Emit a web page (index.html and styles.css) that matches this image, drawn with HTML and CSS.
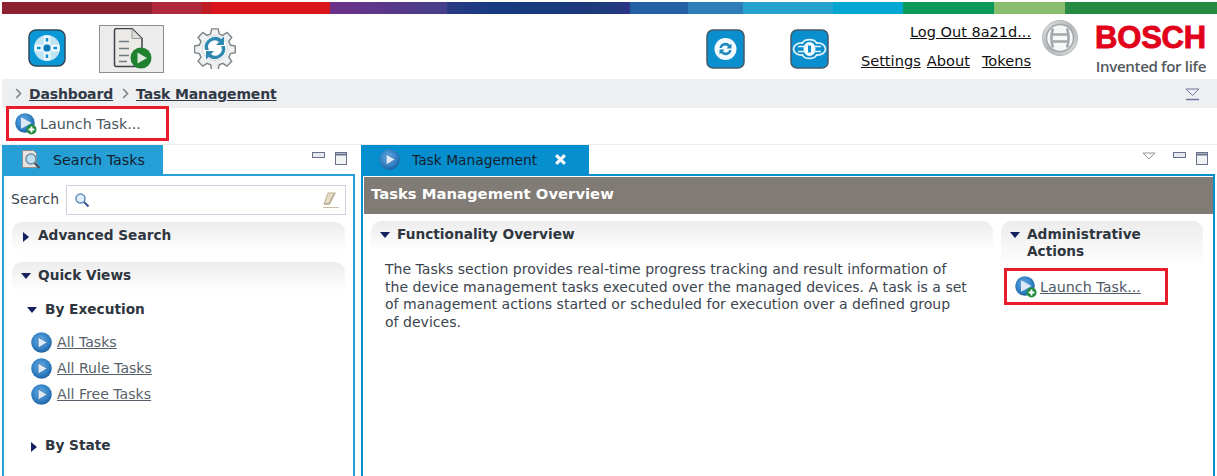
FILE: index.html
```html
<!DOCTYPE html>
<html lang="en">
<head>
<meta charset="utf-8">
<title>Task Management</title>
<link rel="stylesheet" href="styles.css">
</head>
<body>
<svg class="defs" width="0" height="0" aria-hidden="true">
  <defs>
    <radialGradient id="orb" cx="45%" cy="40%" r="65%">
      <stop offset="0" stop-color="#6aaee6"/><stop offset="0.65" stop-color="#2f7fc4"/><stop offset="1" stop-color="#1b5890"/>
    </radialGradient>
    <linearGradient id="silver" x1="0" y1="0" x2="1" y2="1">
      <stop offset="0" stop-color="#e6e8e9"/><stop offset=".5" stop-color="#b0b4b6"/><stop offset="1" stop-color="#dfe1e2"/>
    </linearGradient>
    <symbol id="play" viewBox="0 0 20 20">
      <circle cx="10" cy="10" r="9.800" fill="url(#orb)"/>
      <path d="M6.800 4.800 15.500 10l-8.700 5.200z" fill="#dfeaf6" stroke="#2a659f" stroke-width=".6"/>
    </symbol>
    <symbol id="playadd" viewBox="0 0 22 22">
      <circle cx="10" cy="10" r="9.800" fill="url(#orb)"/>
      <path d="M6 4.200 16.500 10 6 15.800z" fill="#dfe9f4"/>
      <circle cx="16.500" cy="16.500" r="5" fill="#1f8a3a"/>
      <path d="M16.500 13.600v5.800M13.600 16.500h5.800" stroke="#fff" stroke-width="1.800"/>
    </symbol>
    <symbol id="tri-down" viewBox="0 0 10 6"><path d="M0 0h10L5 6z" fill="#14215f"/></symbol>
    <symbol id="tri-right" viewBox="0 0 6 10"><path d="M0 0v10l6-5z" fill="#14215f"/></symbol>
    <symbol id="min" viewBox="0 0 13 7"><rect x=".5" y=".5" width="12" height="5" fill="#e6e8ef" stroke="#69708c"/></symbol>
    <symbol id="max" viewBox="0 0 12 13"><rect x=".5" y=".5" width="11" height="12" fill="#f2f3f5" stroke="#69708c"/><path d="M1 2.500h10" stroke="#69708c" stroke-width="2"/></symbol>
    <symbol id="chevron" viewBox="0 0 7 11"><path d="m1.200 1 4.300 4.500-4.300 4.500" fill="none" stroke="#858a90" stroke-width="1.800"/></symbol>
  </defs>
</svg>

<div class="rainbow">
  <i class="c1"></i><i class="c2"></i><i class="c3"></i><i class="c4"></i><i class="c5"></i><i class="c6"></i><i class="c7"></i><i class="c8"></i><i class="c9"></i><i class="c10"></i><i class="c11"></i><i class="c12"></i><i class="c13"></i>
</div>

<header class="top">
  <nav class="nav-left">
    <span class="nav-icon">
      <svg width="38" height="38" viewBox="0 0 38 38">
        <rect x="1" y="1" width="36" height="36" rx="7" fill="#0a97d6" stroke="#2f4a5c" stroke-width="1.500"/>
        <circle cx="19" cy="19" r="13" fill="#bfe5f5"/>
        <g fill="#eaf7fc"><rect x="15.500" y="6.500" width="7" height="9" rx="1.500"/><rect x="15.500" y="22.500" width="7" height="9" rx="1.500"/><rect x="6.500" y="15.500" width="9" height="7" rx="1.500"/><rect x="22.500" y="15.500" width="9" height="7" rx="1.500"/></g>
        <circle cx="19" cy="19" r="3.500" fill="#0b78b4"/>
        <g fill="#0a8fce"><rect x="17.800" y="9" width="2.400" height="3.500"/><rect x="17.800" y="25.500" width="2.400" height="3.500"/><rect x="9" y="17.800" width="3.500" height="2.400"/><rect x="25.500" y="17.800" width="3.500" height="2.400"/></g>
      </svg>
    </span>
    <span class="nav-icon active">
      <svg width="40" height="42" viewBox="0 0 40 42">
        <path d="M2.500 2.500a2 2 0 0 1 2-2H20l10 10v26a2 2 0 0 1-2 2H4.500a2 2 0 0 1-2-2z" fill="#eceae6" stroke="#3f444a" stroke-width="1.500"/>
        <path d="M20 1v9.500h9.500" fill="#dcdcdc" stroke="#9a9a9a"/>
        <path d="M7 13.500h10M7 20.500h10M7 27.500h10M7 33.500h8" stroke="#6f7a80" stroke-width="1.500"/>
        <circle cx="29" cy="30" r="10.500" fill="#1f8130"/>
        <path d="M25.500 24.500 35 30l-9.500 5.500z" fill="#dfe8dc"/>
      </svg>
    </span>
    <span class="nav-icon">
      <svg width="42" height="42" viewBox="0 0 42 42">
        <path d="M17.500 1h7l1 5.200 3.800 1.600 4.400-3 5 5-3 4.400 1.600 3.800 5.200 1v7l-5.200 1-1.600 3.800 3 4.400-5 5-4.400-3-3.800 1.600-1 5.200h-7l-1-5.200-3.800-1.600-4.400 3-5-5 3-4.400-1.600-3.800-5.200-1v-7l5.200-1 1.600-3.800-3-4.400 5-5 4.400 3 3.800-1.600z" fill="#eef0f1" stroke="#7d8588" stroke-width="1.500" transform="scale(.95) translate(1 1)"/>
        <circle cx="21" cy="21" r="12.500" fill="#fff" stroke="#d4d8da"/>
        <path d="M11 23a10.500 10.500 0 0 1 16.500-11L30 9.500V18h-8l3-3a6.500 6.500 0 0 0-10 8z" fill="#2f88b0"/>
        <path d="M31 19a10.500 10.500 0 0 1-16.500 11L12 32.500V24h8l-3 3a6.500 6.500 0 0 0 10-8z" fill="#2f88b0"/>
      </svg>
    </span>
  </nav>
  <div class="nav-right">
    <span class="square-btn">
      <svg width="39" height="40" viewBox="0 0 39 40">
        <rect x="1" y="1" width="37" height="38" rx="6" fill="#0a8fce" stroke="#455a68" stroke-width="1.500"/>
        <circle cx="19.500" cy="20" r="11" fill="#f2fafd"/>
        <path d="M13.500 19a6 6 0 0 1 10.500-3l1.500-1.500v5h-5l1.700-1.700a3.800 3.800 0 0 0-6.500 1.200zM25.500 21a6 6 0 0 1-10.500 3l-1.500 1.500v-5h5l-1.700 1.700a3.800 3.800 0 0 0 6.500-1.200z" fill="#1d86bd"/>
      </svg>
    </span>
    <span class="square-btn">
      <svg width="39" height="40" viewBox="0 0 39 40">
        <rect x="1" y="1" width="37" height="38" rx="6" fill="#0a8fce" stroke="#455a68" stroke-width="1.500"/>
        <path d="M12.500 14c2-4.500 12-4.500 14 0 5-.5 9 2.500 9 6s-4 6.500-9 6c-2 4.500-12 4.500-14 0-5 .5-9-2.500-9-6s4-6.500 9-6z" fill="none" stroke="#dff1f9" stroke-width="1.800"/>
        <ellipse cx="19.500" cy="20" rx="6" ry="7" fill="#f5fbfd"/>
        <path d="M8 17.500h7M8 22.500h7M24 17.500h7M24 22.500h7" stroke="#dff1f9" stroke-width="1.500"/>
        <path d="M19.500 16.500v7" stroke="#0a8fce" stroke-width="3"/>
      </svg>
    </span>
    <div class="user-links">
      <a class="link-top" href="#">Log Out 8a21d...</a>
      <div class="link-row"><a href="#">Settings</a><a href="#">About</a><a class="tokens" href="#">Tokens</a></div>
    </div>
    <svg class="armature" width="38" height="38" viewBox="0 0 38 38">
      <circle cx="19" cy="19" r="17.500" fill="url(#silver)" stroke="#b4b8ba"/>
      <circle cx="19" cy="19" r="13.500" fill="#f6f7f7" stroke="#a3a7aa" stroke-width="1.500"/>
      <path d="M12 9.500c-2 6-2 13 0 19M26 9.500c2 6 2 13 0 19M11 15.500h16M11 22.500h16" stroke="#a4a8ab" stroke-width="2.600" fill="none"/>
    </svg>
    <div class="brand">
      <span class="brand-name">BOSCH</span>
      <span class="brand-tag">Invented for life</span>
    </div>
  </div>
</header>

<div class="crumbs">
  <svg class="chev" width="7" height="11"><use href="#chevron"/></svg><a href="#">Dashboard</a><svg class="chev" width="7" height="11"><use href="#chevron"/></svg><a href="#">Task Management</a>
  <svg class="crumb-menu" width="15" height="13" viewBox="0 0 15 13"><path d="M1 1h13L7.500 7.500z" fill="#eeeff4" stroke="#6f74a0"/><path d="M1 11.500h13" stroke="#6f74a0" stroke-width="1.500"/></svg>
</div>

<div class="toolbar">
  <div class="redbox toolbar-box">
    <svg width="22" height="22"><use href="#playadd"/></svg>
    <span>Launch Task...</span>
  </div>
</div>

<main class="panes">
  <section class="pane pane-left">
    <div class="tabbar">
      <div class="tab tab-search">
        <svg width="21" height="21" viewBox="0 0 21 21"><path d="M1.500 1.500h11l3 3v14h-14z" fill="#e6e3de" stroke="#8c8f91"/><circle cx="10" cy="10" r="5" fill="#bfe0f2" stroke="#6e8ea6" stroke-width="1.500"/><path d="m13.500 14 5 5" stroke="#4e5358" stroke-width="2.200"/></svg>
        <span>Search Tasks</span>
      </div>
      <div class="win-ctl"><svg width="13" height="7"><use href="#min"/></svg><svg width="12" height="13"><use href="#max"/></svg></div>
    </div>
    <div class="pane-body left-body">
      <div class="search-row">
        <label>Search</label>
        <div class="search-box">
          <svg width="16" height="16" viewBox="0 0 16 16"><circle cx="6.500" cy="6.500" r="4.500" fill="#e2eff9" stroke="#5f8fc4" stroke-width="1.500"/><path d="m10 10 4.500 4.500" stroke="#3f4f8a" stroke-width="2"/></svg>
          <svg width="18" height="18" viewBox="0 0 18 18"><path d="M6 2h7.500l-1 1.500-5 9.500H2z" fill="#e6dcc6" stroke="#bdb095"/><path d="M2 13h5l5-10" fill="none" stroke="#a99d85"/><path d="M1 16.500h16" stroke="#c9bda4"/></svg>
        </div>
      </div>
      <div class="section-head"><svg class="tri-r" width="6" height="10"><use href="#tri-right"/></svg><span>Advanced Search</span></div>
      <div class="section-head quick"><svg class="tri-d" width="10" height="6"><use href="#tri-down"/></svg><span>Quick Views</span></div>
      <div class="sub-head exec"><svg width="10" height="6"><use href="#tri-down"/></svg><span>By Execution</span></div>
      <ul class="task-list">
        <li><svg width="21" height="21"><use href="#play"/></svg><a href="#">All Tasks</a></li>
        <li><svg width="21" height="21"><use href="#play"/></svg><a href="#">All Rule Tasks</a></li>
        <li><svg width="21" height="21"><use href="#play"/></svg><a href="#">All Free Tasks</a></li>
      </ul>
      <div class="sub-head state"><svg width="6" height="10"><use href="#tri-right"/></svg><span>By State</span></div>
    </div>
  </section>

  <section class="pane pane-right">
    <div class="tabbar">
      <div class="tab tab-task">
        <svg width="21" height="21"><use href="#play"/></svg>
        <span>Task Management</span>
        <svg class="close" width="13" height="13" viewBox="0 0 12 12"><path d="m2 2 8 8M10 2l-8 8" stroke="#f4f6f8" stroke-width="3"/></svg>
      </div>
      <div class="win-ctl">
        <svg class="view-menu" width="14" height="8" viewBox="0 0 14 8"><path d="M1 1h12L7 7z" fill="#fff" stroke="#8f9296"/></svg>
        <svg width="13" height="7"><use href="#min"/></svg><svg width="12" height="13"><use href="#max"/></svg>
      </div>
    </div>
    <div class="pane-body right-body">
      <h1 class="title-bar">Tasks Management Overview</h1>
      <div class="columns">
        <article class="col-main">
          <div class="section-head"><svg class="tri-d" width="10" height="6"><use href="#tri-down"/></svg><span>Functionality Overview</span></div>
          <p>The Tasks section provides real-time progress tracking and result information of the device management tasks executed over the managed devices. A task is a set of management actions started or scheduled for execution over a defined group of devices.</p>
        </article>
        <aside class="col-side">
          <div class="section-head side-head"><svg class="tri-d" width="10" height="6"><use href="#tri-down"/></svg><span>Administrative Actions</span></div>
          <div class="redbox side-box">
            <svg width="22" height="22"><use href="#playadd"/></svg>
            <a href="#">Launch Task...</a>
          </div>
        </aside>
      </div>
    </div>
  </section>
</main>
</body>
</html>
```
FILE: styles.css
```css
* { box-sizing: border-box; }
html, body { margin: 0; padding: 0; }
body {
  width: 1217px;
  height: 476px;
  overflow: hidden;
  background: #fff;
  font-family: "DejaVu Sans", Verdana, sans-serif;
  font-size: 14px;
  color: #333;
}
.defs { display: block; height: 0; }
a { color: inherit; }

.rainbow { display: flex; height: 12px; margin: 2px 0 0 2px; }
.rainbow i { display: block; height: 100%; }
.c1 { width: 150px; background: #8e2233; }
.c2 { width: 50px; background: #b0283c; }
.c3 { width: 9px; background: #bc1c22; }
.c4 { width: 119px; background: #d8161c; }
.c5 { width: 117px; background: linear-gradient(90deg, #6c3088, #46408a); }
.c6 { width: 183px; background: linear-gradient(90deg, #2a3a85, #163a80 25%, #1c3a7c 85%, #2a3584); }
.c7 { width: 58px; background: #2460a6; }
.c8 { width: 55px; background: #2f7db8; }
.c9 { width: 90px; background: #27a3cf; }
.c10 { width: 70px; background: #02a8d1; }
.c11 { width: 91px; background: #079a58; }
.c12 { width: 71px; background: #8abd6e; }
.c13 { flex: 1; background: #268a43; }

.top { display: flex; justify-content: space-between; height: 65px; padding-left: 28px; }
.nav-left { display: flex; align-items: flex-start; }
.nav-icon { display: flex; align-items: center; justify-content: center; margin-top: 11px; }
.nav-icon:first-child { width: 38px; height: 46px; }
.nav-icon.active { width: 65px; height: 48px; margin: 11px 0 0 33px; background: #ececec; border: 1px solid #8e8e8e; }
.nav-icon:last-child { width: 42px; height: 46px; margin-left: 30px; }
.nav-right { display: flex; align-items: flex-start; padding-right: 11px; }
.square-btn { margin: 15px 0 0 0; width: 39px; height: 40px; }
.square-btn + .square-btn { margin-left: 45px; }
.user-links { width: 202px; font-size: 14.500px; color: #111; text-align: right; padding-top: 9px; }
.link-top { display: block; line-height: 18px; }
.link-row { display: flex; justify-content: flex-end; gap: 6px; font-size: 14.600px; line-height: 18px; margin-top: 11px; }
.link-row .tokens { margin-left: 6px; }
.armature { margin: 5px 0 0 10px; }
.brand { display: flex; flex-direction: column; align-items: flex-end; margin-left: 16px; padding-top: 8px; }
.brand-name { font-family: "Liberation Sans", Arial, sans-serif; font-weight: 700; font-size: 31px; line-height: 32px; color: #e2001a; letter-spacing: -.2px; -webkit-text-stroke: .9px #e2001a; }
.brand-tag { font-family: "Open Sans", "Liberation Sans", sans-serif; font-weight: 600; font-size: 15.100px; line-height: 18px; color: #53595e; letter-spacing: -.35px; margin-top: 3px; }

.crumbs { display: flex; align-items: center; height: 29px; margin-left: 2px; background: #eeeff1; font-size: 14px; letter-spacing: -.15px; font-weight: 700; padding: 0 17px 0 13px; }
.crumbs a { color: #303a46; }
.chev { flex: none; margin-right: 7px; }
.crumbs a + .chev { margin-left: 9px; }
.crumb-menu { margin-left: auto; margin-top: 2px; }

.toolbar { display: flex; align-items: flex-start; height: 37px; padding: 0 0 0 6px; border-bottom: 1px solid #eeeeee; }
.redbox { display: flex; align-items: center; border: 3px solid #ea1c2c; }
.toolbar-box { position: relative; width: 163px; height: 35px; margin-top: -2px; gap: 3px; padding-left: 6px; font-size: 14.300px; color: #4a5560; }

.panes { display: flex; gap: 6px; padding-left: 2px; height: 331px; }
.pane { display: flex; flex-direction: column; }
.pane-left { width: 353px; }
.pane-right { flex: 1; padding-right: 2px; }
.tabbar { display: flex; justify-content: space-between; height: 29px; flex: none; }
.tab { display: flex; align-items: center; height: 29px; color: #13212e; }
.tab-search { width: 161px; background: #259fd6; padding-left: 19px; gap: 11px; font-size: 14.300px; }
.tab-task { width: 228px; background: #068fcf; padding-left: 18px; gap: 12px; font-size: 13.800px; }
.tab-task .close { margin-left: 5px; }
.win-ctl { display: flex; align-items: flex-start; gap: 10px; padding: 7px 8px 0 0; }
.pane-right .win-ctl { padding-right: 7px; }
.view-menu { margin-right: 7px; }
.pane-body { flex: 1; border: 2px solid #259fd6; border-bottom: 0; background: #fff; }
.pane-right .pane-body { border-color: #068fcf; }

.left-body { padding: 9px 7px 0 7px; }
.search-row { display: flex; align-items: center; gap: 7px; margin-bottom: 7px; }
.search-row label { font-size: 14px; color: #3c4650; padding-bottom: 2px; }
.search-box { flex: 1; height: 30px; display: flex; align-items: center; justify-content: space-between; padding: 0 5px 0 7px; border: 1px solid #ced2de; }
.section-head { display: flex; align-items: flex-start; gap: 9px; padding: 5px 10px 0 11px; min-height: 29px; border-radius: 10px 10px 0 0; background: linear-gradient(#ececed, #ffffff); font-size: 13.700px; font-weight: 700; line-height: 17px; color: #2f3640; }
.section-head svg, .sub-head svg { flex: none; margin-top: 5px; }
.section-head .tri-d { margin-left: -2px; margin-right: -2px; margin-top: 6px; }
.left-body .section-head { margin-left: 1px; margin-right: 1px; }
.section-head.quick { margin-top: 11px; }
.sub-head { display: flex; align-items: flex-start; font-size: 13.700px; font-weight: 700; line-height: 17px; color: #2f3640; gap: 8px; }
.sub-head.exec { margin: 10px 0 0 16px; }
.sub-head.exec svg { margin-top: 6px; }
.sub-head.state { margin: 30px 0 0 20px; }
.task-list { list-style: none; margin: 11px 0 0 20px; padding: 0; }
.task-list li { display: flex; align-items: center; gap: 5px; height: 26px; font-size: 14.100px; color: #565f6a; }

.right-body { padding: 1px 0 0 1px; }
.title-bar { margin: 0; height: 37px; line-height: 33px; padding-left: 7px; background: #807b74; color: #fff; font-size: 14.800px; font-weight: 700; }
.columns { display: flex; gap: 8px; padding: 7px 0 0 7px; }
.col-main { width: 622px; }
.col-main p { margin: 0; padding: 11px 25px 0 14px; font-size: 14.050px; line-height: 17.500px; color: #3c4650; }
.col-side { width: 202px; }
.side-head { padding-top: 5px; min-height: 46px; }
.side-box { width: 164px; height: 37px; margin: 1px 0 0 3px; gap: 3px; padding-left: 8px; font-size: 14.300px; color: #4e5a68; }
```
